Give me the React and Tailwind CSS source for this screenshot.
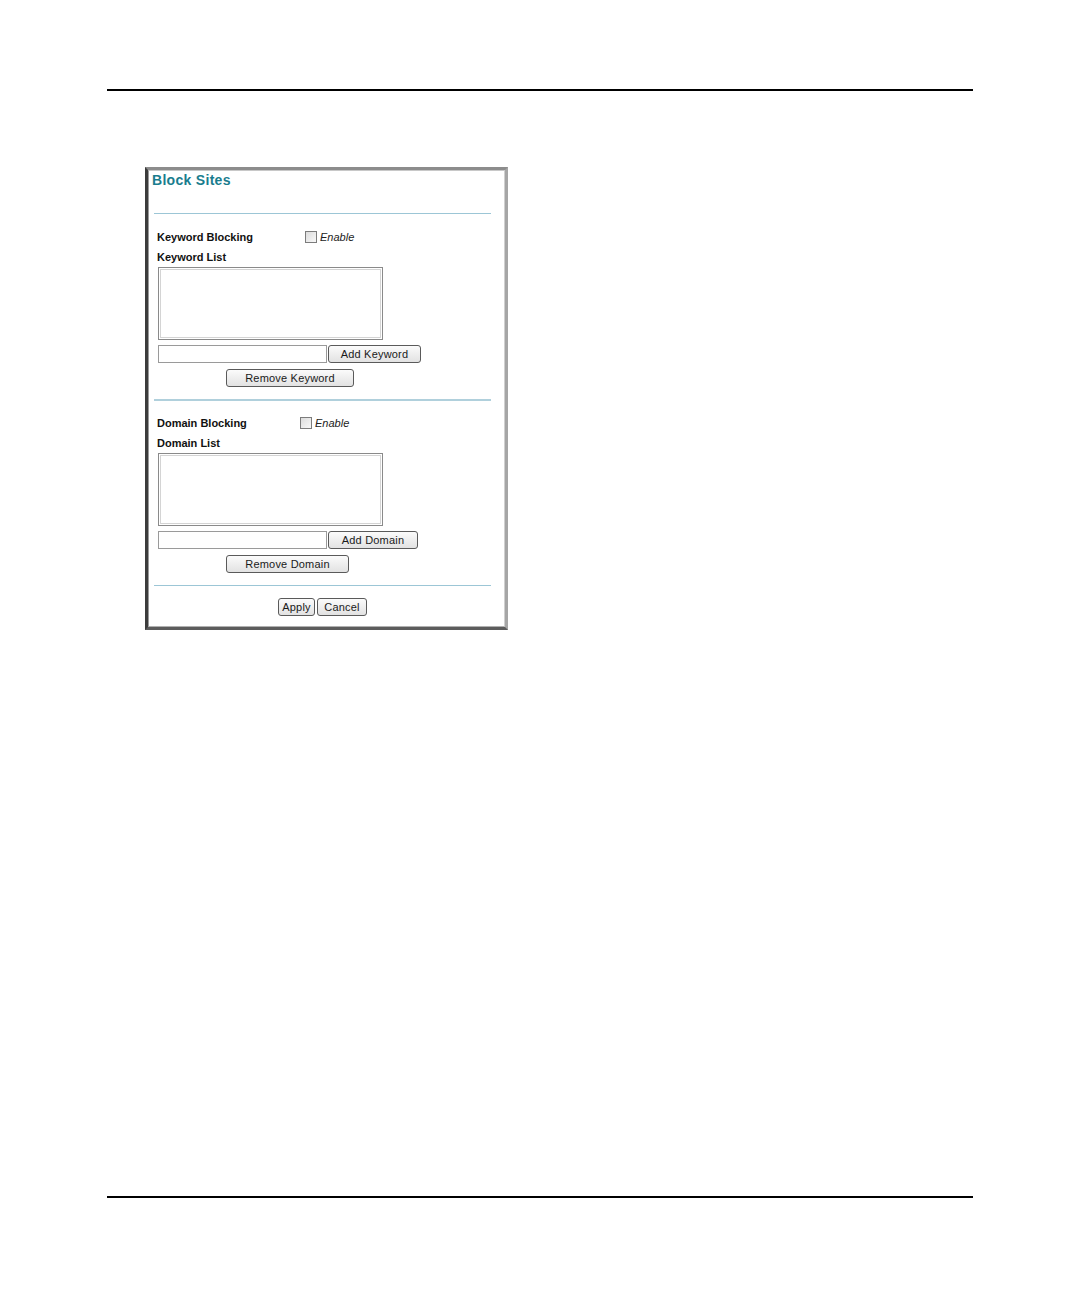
const font = { fontFamily: '"Liberation Sans", Arial, sans-serif' }

const Btn = ({ w, children }) => (
  <button
    type="button"
    className={`${w} h-[18px] rounded-[3px] border border-[#5a5a5a] bg-gradient-to-b from-[#fbfbfb] to-[#e2e2e2] text-[11px] leading-none text-[#1a1a1a] tracking-[0.2px] flex items-center justify-center`}
  >
    {children}
  </button>
)

const Section = ({ label, listLabel, labelW, addLabel, addW, removeLabel, removeW }) => (
  <div className="flex flex-col">
    <div className="flex items-center h-[14px] pl-[8px]">
      <span className={`${labelW} text-[11px] font-bold text-[#111]`}>{label}</span>
      <span className="w-[12px] h-[12px] border border-[#7c7c7c] bg-gradient-to-br from-[#dcdcdc] to-[#f8f8f8]"></span>
      <span className="ml-[3px] text-[11px] italic text-[#222]">Enable</span>
    </div>
    <div className="mt-[6px] h-[14px] pl-[8px] text-[11px] font-bold text-[#111] leading-[14px]">{listLabel}</div>
    <div className="mt-[3px] ml-[9px] w-[225px] h-[73px] border border-[#8a8a8a] p-[1px]">
      <div className="w-full h-full border border-[#d4d4d4] bg-white"></div>
    </div>
    <div className="mt-[5px] ml-[9px] flex items-center gap-[1px]">
      <div className="w-[169px] h-[18px] border border-[#9a9a9a] bg-white"></div>
      <Btn w={addW}>{addLabel}</Btn>
    </div>
    <div className="mt-[6px] ml-[77px]">
      <Btn w={removeW}>{removeLabel}</Btn>
    </div>
  </div>
)

export default function App() {
  return (
    <div className="w-[1080px] h-[1296px] bg-white flex flex-col" style={font}>
      <div className="mt-[89px] mx-[107px] h-[2px] bg-black"></div>

      <div className="ml-[145px] mt-[76px] w-[363px] h-[463px] border-l-[3px] border-t-[3px] border-r-[3px] border-b-[3px] border-l-[#3c3c3c] border-t-[#8c8c8c] border-r-[#a6a6a6] border-b-[#5c5c5c]">
        <div className="w-full h-full border border-t-[#c8c8c8] border-l-[#9a9a9a] border-r-[#d0d0d0] border-b-[#b0b0b0] bg-white flex flex-col">
          <div className="pt-[1px] pl-[3px] text-[14px] leading-[16px] font-bold tracking-[0.3px] text-[#1a7d8e]">Block Sites</div>
          <div className="mt-[25px] ml-[5px] mr-[13px] h-[1px] bg-[#9cc6d6]"></div>

          <div className="mt-[16px]">
            <Section
              label="Keyword Blocking"
              listLabel="Keyword List"
              labelW="w-[148px]"
              addLabel="Add Keyword"
              addW="w-[93px]"
              removeLabel="Remove Keyword"
              removeW="w-[128px]"
            />
          </div>

          <div className="mt-[12px] ml-[5px] mr-[13px] h-[2px] bg-[#b0d0dc]"></div>

          <div className="mt-[15px]">
            <Section
              label="Domain Blocking"
              listLabel="Domain List"
              labelW="w-[143px]"
              addLabel="Add Domain"
              addW="w-[90px]"
              removeLabel="Remove Domain"
              removeW="w-[123px]"
            />
          </div>

          <div className="mt-[12px] ml-[5px] mr-[13px] h-[1px] bg-[#9cc6d6]"></div>

          <div className="mt-[12px] ml-[5px] mr-[13px] flex justify-center gap-[2px]">
            <Btn w="w-[37px]">Apply</Btn>
            <Btn w="w-[50px]">Cancel</Btn>
          </div>
        </div>
      </div>

      <div className="mt-auto mb-[98px] mx-[107px] h-[2px] bg-black"></div>
    </div>
  )
}
